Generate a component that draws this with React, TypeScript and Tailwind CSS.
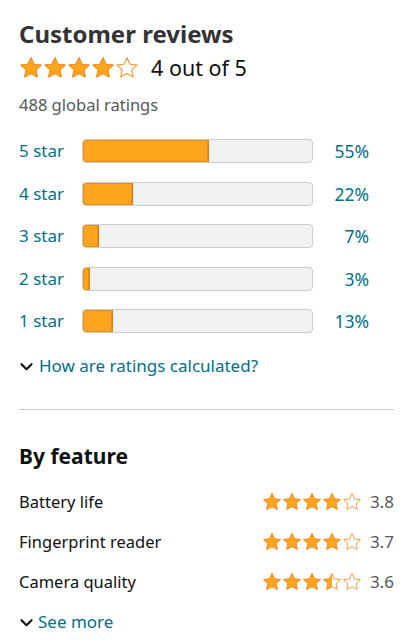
import React from "react";

const STAR = "M12 1.8l3.05 6.45 7.05.85-5.25 4.8 1.45 7L12 17.5l-6.3 3.4 1.45-7L1.9 9.1l7.05-.85z";

function Star({ fill, size, id }: { fill: number; size: number; id: string }) {
  return (
    <svg width={size} height={size} viewBox="0 0 24 24" className="block shrink-0">
      <defs>
        <clipPath id={id}>
          <rect x="0" y="0" width={24 * fill} height="24" />
        </clipPath>
      </defs>
      <path d={STAR} fill="#ffffff" stroke="#F0952F" strokeWidth="1.1" strokeLinejoin="round" />
      {fill > 0 && (
        <path d={STAR} fill="#FFA41C" stroke="#F0952F" strokeWidth="1.1" strokeLinejoin="round" clipPath={`url(#${id})`} />
      )}
    </svg>
  );
}

function Stars({ fills, size, prefix }: { fills: number[]; size: number; prefix: string }) {
  return (
    <div className="flex items-center">
      {fills.map((f, i) => (
        <Star key={i} fill={f} size={size} id={`${prefix}-${i}`} />
      ))}
    </div>
  );
}

function Chevron() {
  return (
    <svg width="15" height="15" viewBox="0 0 14 14" className="block shrink-0">
      <path d="M2.3 4.8l4.7 4.7 4.7-4.7" fill="none" stroke="#0F1111" strokeWidth="2" strokeLinecap="round" strokeLinejoin="round" />
    </svg>
  );
}

const rows = [
  { label: "5 star", pct: 55 },
  { label: "4 star", pct: 22 },
  { label: "3 star", pct: 7 },
  { label: "2 star", pct: 3 },
  { label: "1 star", pct: 13 },
];

const features = [
  { name: "Battery life", fills: [1, 1, 1, 1, 0], score: "3.8" },
  { name: "Fingerprint reader", fills: [1, 1, 1, 1, 0], score: "3.7" },
  { name: "Camera quality", fills: [1, 1, 1, 0.5, 0], score: "3.6" },
];

export default function App() {
  return (
    <div
      className="w-[416px] h-[642px] bg-white pl-[19px] pr-[22px] pt-[18px] overflow-hidden"
      style={{ fontFamily: '"Noto Sans", "Open Sans", Arial, sans-serif' }}
    >
      <h2 className="text-[24px] leading-[32px] font-bold text-[#333333]">Customer reviews</h2>
      <div className="flex items-center h-[28px] mt-[4px]">
        <Stars fills={[1, 1, 1, 1, 0]} size={24} prefix="main" />
        <span className="ml-[12px] text-[21.5px] text-[#0F1111] leading-[28px]">4 out of 5</span>
      </div>
      <div className="mt-[12px] text-[16.5px] leading-[22px] text-[#565959]">488 global ratings</div>

      <div className="mt-[23px] flex flex-col gap-[18.5px]">
        {rows.map((r) => (
          <div key={r.label} className="flex items-center h-[24px]">
            <span className="w-[63px] text-[17px] leading-[24px] text-[#007185]">{r.label}</span>
            <div className="relative w-[231px] h-[24px] rounded-[4px] border border-[#C9CCCC] bg-[#F0F2F2] overflow-hidden">
              <div
                className="absolute left-0 top-0 bottom-0 bg-[#FFA41C] border-r border-[#E47911] shadow-[inset_0_0_0_1px_#E98F15] rounded-l-[3px]"
                style={{ width: `${r.pct}%` }}
              />
            </div>
            <span className="w-[56px] text-right text-[17.5px] leading-[24px] text-[#007185]">{r.pct}%</span>
          </div>
        ))}
      </div>

      <div className="mt-[21px] flex items-center gap-[5px] h-[24px]">
        <Chevron />
        <span className="text-[17px] leading-[24px] text-[#007185]">How are ratings calculated?</span>
      </div>

      <div className="mt-[31px] h-px bg-[#CCCCCC]" />

      <h3 className="mt-[32px] text-[21px] leading-[28px] font-bold text-[#0F1111]">By feature</h3>

      <div className="mt-[20px] flex flex-col gap-[16px]">
        {features.map((f, i) => (
          <div key={f.name} className="flex items-center justify-between h-[24px]">
            <span className="text-[16.5px] leading-[24px] text-[#0F1111]">{f.name}</span>
            <div className="flex items-center">
              <Stars fills={f.fills} size={20} prefix={`f${i}`} />
              <span className="ml-[8px] text-[17px] leading-[24px] text-[#565959]">{f.score}</span>
            </div>
          </div>
        ))}
      </div>

      <div className="mt-[16px] flex items-center gap-[4px] h-[24px]">
        <Chevron />
        <span className="text-[17px] leading-[24px] text-[#007185]">See more</span>
      </div>
    </div>
  );
}
